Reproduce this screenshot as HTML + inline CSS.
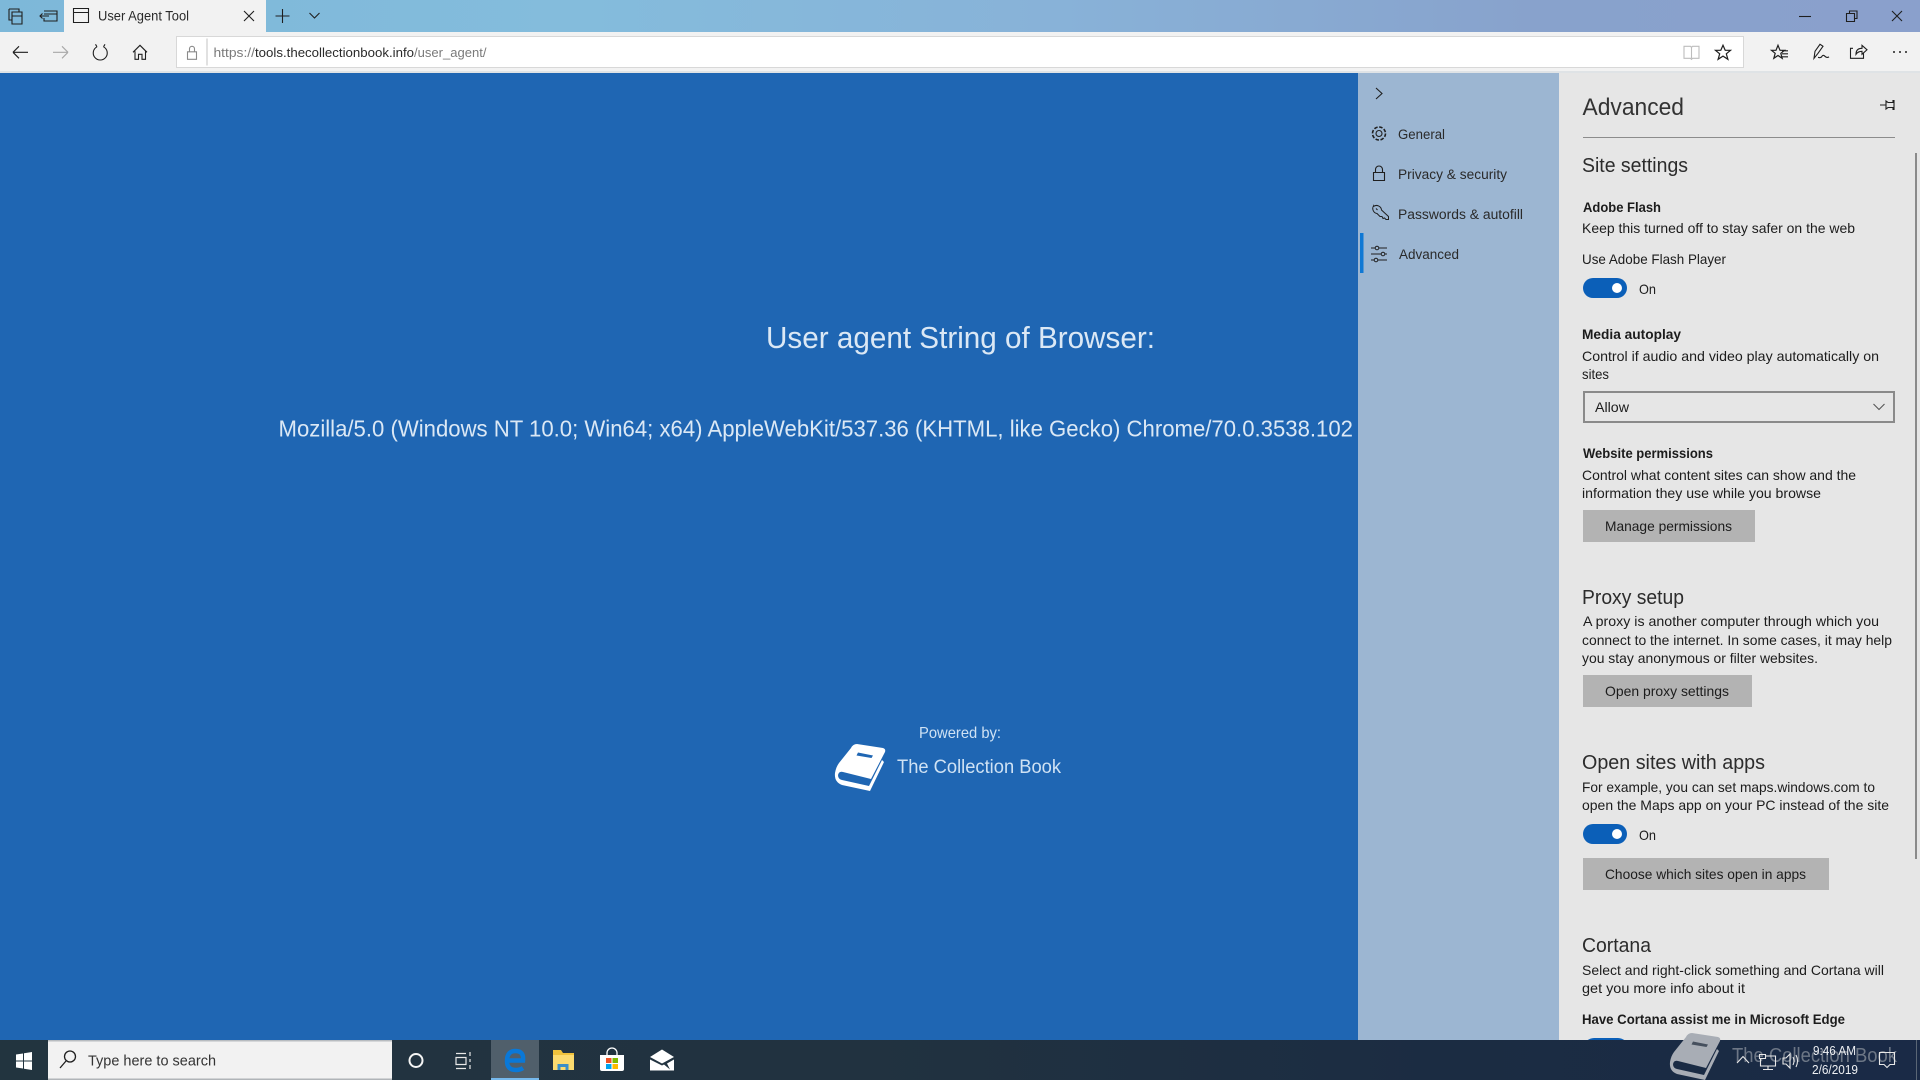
<!DOCTYPE html>
<html lang="en"><head><meta charset="utf-8"><title>User Agent Tool</title>
<style>
html,body{margin:0;padding:0;width:1920px;height:1080px;overflow:hidden;background:#1f66b3}
svg{display:block}
text{font-family:"Liberation Sans",sans-serif;white-space:pre}
.b{font-size:14px;fill:#1c1c1c}
.m{font-size:14px;fill:#1c1c1c;font-weight:bold}
.h{font-size:20px;fill:#2c2c2c}
.s{font-size:13.5px;fill:#2a2a2a}
.i{fill:none;stroke:#1f1f1f;stroke-width:1.1}
</style></head><body>
<svg width="1920" height="1080" viewBox="0 0 1920 1080" xmlns="http://www.w3.org/2000/svg">
<defs>
<linearGradient id="t" x1="0" x2="1" y1="0" y2="0"><stop offset="0" stop-color="#7db8d9"/><stop offset=".3" stop-color="#84bcdc"/><stop offset=".55" stop-color="#88b2d8"/><stop offset=".8" stop-color="#88a2cc"/><stop offset="1" stop-color="#8aa0cc"/></linearGradient>
<linearGradient id="k" x1="0" x2="1" y1="0" y2="0"><stop offset="0" stop-color="#22343f"/><stop offset=".45" stop-color="#213240"/><stop offset=".75" stop-color="#1b2c42"/><stop offset="1" stop-color="#1a2a46"/></linearGradient>
</defs>
<!-- title bar -->
<rect width="1920" height="32" fill="url(#t)"/>
<rect x="64" width="202" height="32" fill="#f2f2f2"/>
<g class="i" fill="none">
<path class="i" d="M9 9h10v3M9 9v11h3M12 12h10v12H12z M12 16h10"/>
<path class="i" d="M44 11h13v10H44v-3M40 16h9M42.500 13.500L40 16l2.500 2.500M44 14h13"/>
<path class="i" d="M73.500 8.500h15v14h-15zM73.500 12.500h15"/>
<path class="i" d="M244 11l10 10M254 11l-10 10"/>
<path class="i" d="M282.500 9v14M275.500 16h14"/>
<path class="i" d="M309.500 13l5 5 5-5"/>
<path class="i" d="M1799 16.500h12"/>
<path class="i" d="M1846.500 13.500h8v8h-8zM1849.500 13.500v-2.500h7.500v7.500h-2"/>
<path class="i" d="M1892 11l10 10M1902 11l-10 10"/>
</g>
<text x="98" y="20.500" font-size="13.500" fill="#2a2a2a" textLength="91" lengthAdjust="spacingAndGlyphs">User Agent Tool</text>
<!-- toolbar -->
<rect y="32" width="1920" height="40" fill="#f2f2f2"/>
<rect y="71" width="1920" height="2" fill="#dfe3e6"/>
<rect x="176.500" y="36.500" width="1567" height="31" fill="#fff" stroke="#d8d8d8"/>
<path class="i" d="M207 38.500v27" style="stroke:#c8c8c8"/>
<g transform="translate(0 -0.700)">
<path class="i" d="M13 53h15M13 53l6-6M13 53l6 6"/>
<path class="i" style="stroke:#a8a8a8" d="M53 53h15M68 53l-6-6M68 53l-6 6"/>
<path class="i" d="M97 47.500a7 7 0 1 0 6.500 0M97 47.500l-1.500-2.500M103.500 47.500l1.500-2.500"/>
<path class="i" d="M133 53l7-7 7 7M135 52v8h3.500v-5h3.500v5h3.500v-8"/>
<path class="i" style="stroke:#8a8a8a" d="M187.500 52.500h9v7.500h-9zM189.500 52.500v-3a2.500 2.500 0 0 1 5 0v3"/>
<path class="i" style="stroke:#bdbdbd" d="M1684 47h6.500l1 1 1-1h6.500v12h-6.500l-1 1-1-1H1684zM1691.500 48v11"/>
<path class="i" style="stroke-width:1.200" d="M1723 46l2.200 5h5.300l-4.200 3.500 1.600 5.500-4.900-3.200-4.900 3.200 1.600-5.500-4.200-3.500h5.300z"/>
<path class="i" style="stroke-width:1.200" d="M1778 46l2 5h4.500l-3.700 3 1.400 5-4.200-2.800-4.200 2.800 1.400-5-3.700-3h4.500zM1782 51.500h6M1782 54.500h6M1782 57.500h6"/>
<path class="i" style="stroke-width:1.100" d="M1814 59l1-7 5-7 3 2-5 7zM1820 45l3 2M1818 58q3 1 4-1t3 0 4 .5"/>
<path class="i" style="stroke-width:1.100" d="M1853 49h-2.500v10h13v-5M1856 55q0-6 6-6v-3l5 4.500-5 4.500v-3q-4 0-6 3z"/>
</g>
<text x="213.500" y="57" font-size="13px" fill="#7a7a7a" textLength="41.500" lengthAdjust="spacingAndGlyphs">https://</text>
<text x="255" y="57" font-size="13px" fill="#2a2a2a" textLength="159" lengthAdjust="spacingAndGlyphs">tools.thecollectionbook.info</text>
<text x="414" y="57" font-size="13px" fill="#7a7a7a" textLength="72.500" lengthAdjust="spacingAndGlyphs">/user_agent/</text>
<circle cx="1894" cy="52" r="1" fill="#222"/><circle cx="1900" cy="52" r="1" fill="#222"/><circle cx="1906" cy="52" r="1" fill="#222"/>
<!-- page -->
<rect y="73" width="1358" height="967" fill="#1f66b3"/>
<text x="766" y="348" font-size="31px" fill="#dbe8f5" textLength="389" lengthAdjust="spacingAndGlyphs">User agent String of Browser:</text>
<text x="278.500" y="436.500" font-size="23px" fill="#dbe8f5" textLength="1074.500" lengthAdjust="spacingAndGlyphs">Mozilla/5.0 (Windows NT 10.0; Win64; x64) AppleWebKit/537.36 (KHTML, like Gecko) Chrome/70.0.3538.102</text>
<text x="919" y="738" font-size="16px" fill="#cfe2f4" textLength="82" lengthAdjust="spacingAndGlyphs">Powered by:</text>
<text x="897" y="773" font-size="19.500px" fill="#cfe2f4" textLength="164" lengthAdjust="spacingAndGlyphs">The Collection Book</text>
<path fill="#fff" d="M857 744L883 748Q886 749 885 752L871 779L843 772Q839 771 838 775Q838 779 842 780L869 786L882 760L884 762L870 791L842 785Q834 782 835 773Q836 767 839 763L851 748Q853 744 857 744Z"/>
<path fill="#1f66b3" d="M858 752.500L873 755.500L871.500 758L856.500 755.500Z"/>
<!-- sidebar -->
<rect x="1358" y="73" width="201" height="967" fill="#9cb6d2"/>
<rect x="1360" y="233" width="3.500" height="40" fill="#0f78d4"/>
<path class="i" d="M1376 88l6 5.500-6 5.500"/>
<circle class="i" cx="1379" cy="133.500" r="3"/><circle class="i" cx="1379" cy="133.500" r="6.500" stroke-dasharray="3.500 1.600" style="stroke-width:1.600"/>
<path class="i" d="M1373.500 172.500h11v8h-11zM1375.500 172.500v-3a3.500 3.500 0 0 1 7 0v3"/>
<path class="i" d="M1373.500 206.500a5 5 0 0 1 8 3.500l7 6.500v3l-2.500 0-1.500-1.500-1.500.5-1-2-2 0-3-3a5 5 0 0 1-3.500-7.500zM1376 208.500l1.500 1.500" style="stroke-width:1"/>
<path class="i" d="M1371 248h16M1371 254h16M1371 260h16" style="stroke-width:1"/>
<circle cx="1377" cy="248" r="1.800" fill="#9cb6d2" stroke="#1f1f1f"/><circle cx="1383" cy="254" r="1.800" fill="#9cb6d2" stroke="#1f1f1f"/><circle cx="1376" cy="260" r="1.800" fill="#9cb6d2" stroke="#1f1f1f"/>
<text class="s" x="1398" y="139" textLength="47" lengthAdjust="spacingAndGlyphs">General</text>
<text class="s" x="1398" y="179" textLength="109" lengthAdjust="spacingAndGlyphs">Privacy &amp; security</text>
<text class="s" x="1398" y="219" textLength="125" lengthAdjust="spacingAndGlyphs">Passwords &amp; autofill</text>
<text class="s" x="1399" y="259" textLength="60" lengthAdjust="spacingAndGlyphs">Advanced</text>
<!-- panel -->
<rect x="1559" y="73" width="361" height="967" fill="#e6e6e6"/>
<text x="1582.500" y="115" font-size="24px" fill="#333" textLength="101.500" lengthAdjust="spacingAndGlyphs">Advanced</text>
<path class="i" d="M1880 105h6M1886 101v8l2-1.500h5v2h1v-9h-1v2h-5z"/>
<rect x="1583" y="137" width="312" height="1" fill="#8c8c8c"/>
<rect x="1915" y="153" width="2" height="706" fill="#8a8a8a"/>
<text class="h" x="1582" y="172" textLength="106" lengthAdjust="spacingAndGlyphs">Site settings</text>
<text class="m" x="1583" y="212" textLength="78" lengthAdjust="spacingAndGlyphs">Adobe Flash</text>
<text class="b" x="1582" y="233" textLength="273" lengthAdjust="spacingAndGlyphs">Keep this turned off to stay safer on the web</text>
<text class="b" x="1582" y="264" textLength="144" lengthAdjust="spacingAndGlyphs">Use Adobe Flash Player</text>
<rect x="1583" y="278" width="44" height="20" rx="10" fill="#0b5fb8"/><circle cx="1617" cy="288" r="5" fill="#fff"/>
<text class="b" x="1639" y="294" textLength="17" lengthAdjust="spacingAndGlyphs">On</text>
<text class="m" x="1582" y="339" textLength="99" lengthAdjust="spacingAndGlyphs">Media autoplay</text>
<text class="b" x="1582" y="361" textLength="297" lengthAdjust="spacingAndGlyphs">Control if audio and video play automatically on</text>
<text class="b" x="1582" y="379" textLength="27" lengthAdjust="spacingAndGlyphs">sites</text>
<rect x="1584" y="392" width="310" height="30" fill="#e6e6e6" stroke="#8a8a8a" stroke-width="2"/>
<text class="b" x="1595" y="412" textLength="34" lengthAdjust="spacingAndGlyphs">Allow</text>
<path class="i" style="stroke:#555" d="M1873.500 404l5.500 5.500 5.500-5.500"/>
<text class="m" x="1583" y="458" textLength="130" lengthAdjust="spacingAndGlyphs">Website permissions</text>
<text class="b" x="1582" y="480" textLength="274" lengthAdjust="spacingAndGlyphs">Control what content sites can show and the</text>
<text class="b" x="1582" y="498" textLength="239" lengthAdjust="spacingAndGlyphs">information they use while you browse</text>
<rect x="1583" y="510" width="172" height="32" fill="#b3b3b3"/>
<text class="b" x="1605" y="531" textLength="127" lengthAdjust="spacingAndGlyphs">Manage permissions</text>
<text class="h" x="1582" y="604" textLength="102" lengthAdjust="spacingAndGlyphs">Proxy setup</text>
<text class="b" x="1583" y="626" textLength="296" lengthAdjust="spacingAndGlyphs">A proxy is another computer through which you</text>
<text class="b" x="1582" y="645" textLength="310" lengthAdjust="spacingAndGlyphs">connect to the internet. In some cases, it may help</text>
<text class="b" x="1582" y="663" textLength="236" lengthAdjust="spacingAndGlyphs">you stay anonymous or filter websites.</text>
<rect x="1583" y="675" width="169" height="32" fill="#b3b3b3"/>
<text class="b" x="1605" y="696" textLength="124" lengthAdjust="spacingAndGlyphs">Open proxy settings</text>
<text class="h" x="1582" y="769" textLength="183" lengthAdjust="spacingAndGlyphs">Open sites with apps</text>
<text class="b" x="1582" y="792" textLength="293" lengthAdjust="spacingAndGlyphs">For example, you can set maps.windows.com to</text>
<text class="b" x="1582" y="810" textLength="307" lengthAdjust="spacingAndGlyphs">open the Maps app on your PC instead of the site</text>
<rect x="1583" y="824" width="44" height="20" rx="10" fill="#0b5fb8"/><circle cx="1617" cy="834" r="5" fill="#fff"/>
<text class="b" x="1639" y="840" textLength="17" lengthAdjust="spacingAndGlyphs">On</text>
<rect x="1583" y="858" width="246" height="32" fill="#b3b3b3"/>
<text class="b" x="1605" y="879" textLength="201" lengthAdjust="spacingAndGlyphs">Choose which sites open in apps</text>
<text class="h" x="1582" y="952" textLength="69" lengthAdjust="spacingAndGlyphs">Cortana</text>
<text class="b" x="1582" y="975" textLength="302" lengthAdjust="spacingAndGlyphs">Select and right-click something and Cortana will</text>
<text class="b" x="1582" y="993" textLength="163" lengthAdjust="spacingAndGlyphs">get you more info about it</text>
<text class="m" x="1582" y="1024" textLength="263" lengthAdjust="spacingAndGlyphs">Have Cortana assist me in Microsoft Edge</text>
<rect x="1584" y="1038" width="44" height="20" rx="10" fill="#0b5fb8"/>
<!-- taskbar -->
<rect y="1040" width="1920" height="40" fill="url(#k)"/>
<rect x="1916" y="1040" width="1" height="40" fill="#5a6675"/>
<path fill="#fff" d="M16 1054.500l7-1v7h-7zM24 1053.300l8-1.300v8.500h-8zM16 1061.500h7v7l-7-1zM24 1061.500h8v8.500l-8-1.300z"/>
<rect x="48" y="1040" width="344" height="40" fill="#f2f2f2"/>
<rect x="48" y="1040" width="344" height="1.500" fill="#b8bcc0"/><rect x="48" y="1078.500" width="344" height="1.500" fill="#b0b4b8"/>
<circle class="i" cx="70" cy="1056.500" r="5.500" style="stroke-width:1.300"/><path class="i" d="M66 1061l-6 7" style="stroke-width:1.300"/>
<text x="88" y="1065.500" font-size="15px" fill="#333" textLength="128" lengthAdjust="spacingAndGlyphs">Type here to search</text>
<circle cx="416" cy="1060.500" r="6.500" fill="none" stroke="#f5f5f5" stroke-width="2"/>
<path fill="none" stroke="#e8e8e8" stroke-width="1.200" d="M456 1053.500h10M456 1068.500h10M456 1057.500h10v7h-10zM470 1052v4M470 1059v3M470 1065v4"/>
<rect x="491" y="1040" width="48" height="40" fill="#505f6b"/><rect x="491" y="1078" width="48" height="2" fill="#76b9ed"/>
<path fill="none" stroke="#0a78d7" stroke-width="4.500" d="M508 1060.500H523Q524 1051 515.500 1051Q507 1051 507 1061Q507 1070 516 1070Q520 1070 523 1068"/>
<path fill="#f0c23c" d="M553 1050h8l2 3h11v17h-21z"/><rect x="553" y="1055" width="21" height="15" fill="#fcdb6f"/>
<path fill="#3a8fc8" d="M557.500 1070v-6h11v6h-3v-3h-5v3z"/>
<path fill="#fff" d="M600 1055h24v14q0 2-2 2h-20q-2 0-2-2z"/><path fill="none" stroke="#fff" stroke-width="1.300" d="M607 1055v-2a5 5 0 0 1 10 0v2"/>
<rect x="606" y="1058" width="5.500" height="5" fill="#f25022"/><rect x="612.500" y="1058" width="5.500" height="5" fill="#7fba00"/><rect x="606" y="1064" width="5.500" height="5" fill="#00a4ef"/><rect x="612.500" y="1064" width="5.500" height="5" fill="#ffb900"/>
<path fill="#fff" d="M650 1057l12-7.500 12 7.500-12 6.500z"/><path fill="#fff" d="M650 1059.500v11h24v-11l-7 4 3 6-6-5-2 1z"/>
<!-- watermark -->
<g transform="translate(835 289)">
<path fill="#a8adb5" d="M857 744L883 748Q886 749 885 752L871 779L843 772Q839 771 838 775Q838 779 842 780L869 786L882 760L884 762L870 791L842 785Q834 782 835 773Q836 767 839 763L851 748Q853 744 857 744Z"/>
<path fill="#46505e" d="M858 752.500L873 755.500L871.500 758L856.500 755.500Z"/>
</g>
<text x="1732" y="1062" font-size="20px" fill="#6d7786" textLength="165" lengthAdjust="spacingAndGlyphs">The Collection Book</text>
<!-- tray -->
<path fill="none" stroke="#e8e8e8" stroke-width="1.100" d="M1737 1063l6-6.500 6 6.500"/>
<path fill="none" stroke="#e8e8e8" stroke-width="1.100" d="M1759.500 1054.500h6v4h-6zM1766 1056h9.500v10h-15v-7M1768 1066v3M1763 1069.500h10"/>
<path fill="none" stroke="#e8e8e8" stroke-width="1.100" d="M1783 1058h3l4-4v14l-4-4h-3zM1793 1057q2 4 0 8M1796 1055q3 6 0 12"/>
<text x="1813" y="1055" font-size="12.500px" fill="#eef0f3" textLength="43" lengthAdjust="spacingAndGlyphs">9:46 AM</text>
<text x="1812" y="1074" font-size="12.500px" fill="#eef0f3" textLength="46" lengthAdjust="spacingAndGlyphs">2/6/2019</text>
<path fill="none" stroke="#e8e8e8" stroke-width="1.100" d="M1879.500 1052.500h15v12h-4.500l-3 3-3-3h-4.500z"/>
</svg>
</body></html>
